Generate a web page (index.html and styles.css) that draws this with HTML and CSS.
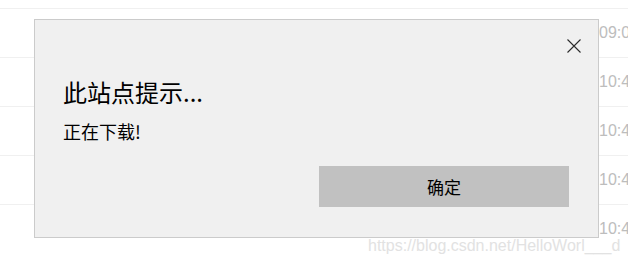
FILE: index.html
```html
<!DOCTYPE html>
<html lang="zh-CN">
<head>
<meta charset="utf-8">
<title>此站点提示</title>
<link rel="stylesheet" href="styles.css">
</head>
<body>
<div class="list">
  <div class="row"><span class="title"></span><span class="time">09:05</span></div>
  <div class="row"><span class="title"></span><span class="time">10:41</span></div>
  <div class="row"><span class="title"></span><span class="time">10:42</span></div>
  <div class="row"><span class="title"></span><span class="time">10:43</span></div>
  <div class="row"><span class="title"></span><span class="time">10:44</span></div>
</div>
<div class="watermark">https://blog.csdn.net/HelloWorl___d</div>
<div class="dialog">
  <div class="dialog-head">
    <svg class="close" width="14" height="14" viewBox="0 0 14 14"><path d="M0.5 0.5 L13.5 13.5 M13.5 0.5 L0.5 13.5" stroke="#2b2b2b" stroke-width="1.1" fill="none"/></svg>
  </div>
  <div class="dialog-title">此站点提示...</div>
  <div class="dialog-msg">正在下载!</div>
  <button class="dialog-btn">确定</button>
</div>
</body>
</html>
```

FILE: styles.css
```css
html, body {
  margin: 0;
  padding: 0;
  background: #ffffff;
  overflow: hidden;
  height: 265px;
}
body {
  position: relative;
  font-family: "Noto Sans CJK SC", "Noto Sans", sans-serif;
}
.list {
  padding-top: 8px;
  width: 680px;
}
.row {
  display: grid;
  grid-template-columns: 599px 81px;
  height: 48px;
  border-top: 1px solid #f0f0f0;
  line-height: 48px;
}
.time {
  font-family: "Liberation Sans", Arial, sans-serif;
  font-size: 16px;
  color: #bdbdbd;
  white-space: nowrap;
}
.watermark {
  position: absolute;
  left: 368px;
  top: 237px;
  font-family: "Liberation Sans", Arial, sans-serif;
  font-size: 16px;
  line-height: 18px;
  color: #e2e2e2;
  white-space: nowrap;
}
.dialog {
  position: absolute;
  left: 34px;
  top: 19px;
  width: 565px;
  box-sizing: border-box;
  background: #f0f0f0;
  border: 1px solid #cbcbcb;
  padding: 0 29px 30px 29px;
  display: flex;
  flex-direction: column;
}
.dialog-head {
  display: flex;
  justify-content: flex-end;
  padding-top: 19px;
  margin-right: -12px;
  height: 14px;
}
.close {
  display: block;
}
.dialog-title {
  margin-top: 23px;
  margin-left: -1px;
  font-size: 24px;
  line-height: 32px;
  color: #000;
}
.dialog-msg {
  margin-top: 11px;
  margin-left: -1px;
  font-size: 18px;
  line-height: 24px;
  color: #000;
}
.dialog-btn {
  align-self: flex-end;
  margin-top: 23px;
  width: 250px;
  height: 41px;
  border: none;
  background: #c1c1c1;
  font-family: "Noto Sans CJK SC", "Noto Sans", sans-serif;
  font-size: 17px;
  color: #000;
  padding: 0;
}
```
